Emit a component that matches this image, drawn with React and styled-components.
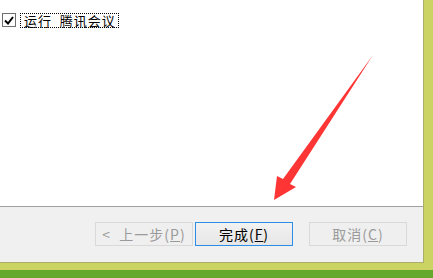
import React from 'react';
import styled, {createGlobalStyle} from 'styled-components';

const GlobalStyle = createGlobalStyle`
  html, body {
    margin: 0;
    padding: 0;
    background: #64a82e;
  }
  body {
    width: 433px;
    height: 278px;
    overflow: hidden;
    font-family: "Noto Sans CJK SC", "Liberation Sans", sans-serif;
  }
`;

const Desktop = styled.div`
  position: relative;
  width: 433px;
  height: 278px;
  background: #64a82e;
`;

const Frame = styled.div`
  width: 433px;
  height: 270px;
  box-sizing: border-box;
  padding: 0 9px 7px 0;
  background: #cbd462;
`;

const Dialog = styled.div`
  display: flex;
  flex-direction: column;
  width: 424px;
  height: 263px;
  box-sizing: border-box;
  border-right: 1px solid #a9ae6a;
  border-bottom: 1px solid #a9ae6a;
  background: #f0f0f0;
`;

const Content = styled.div`
  height: 207px;
  background: #ffffff;
  border-bottom: 1px solid #a0a0a0;
  padding: 13px 0 0 2px;
  box-sizing: border-box;
`;

const CheckRow = styled.label`
  display: flex;
  align-items: center;
  gap: 5px;
`;

const Box = styled.span`
  display: flex;
  align-items: center;
  justify-content: center;
  width: 12px;
  height: 12px;
  border: 1px solid #6f6f6f;
  background: #ffffff;
`;

const Label = styled.span`
  font-size: 13px;
  line-height: 12px;
  letter-spacing: 1px;
  color: #000000;
  padding: 1px 2px 0 3px;
  outline: 1px dotted #000000;
  outline-offset: 0;
  white-space: pre;
`;

const Footer = styled.div`
  flex: 1;
  display: flex;
  align-items: flex-start;
  padding: 15px 16px 0 95px;
`;

const Button = styled.div`
  display: flex;
  align-items: center;
  justify-content: center;
  width: 98px;
  height: 24px;
  box-sizing: border-box;
  margin-left: ${p => p.$gap || 0}px;
  border: 1px solid ${p => (p.$primary ? '#2a8ee8' : '#d9d9d9')};
  background: ${p => (p.$primary ? 'linear-gradient(#f2f2f2, #e6e6e6)' : '#efefef')};
  color: ${p => (p.$disabled ? '#9a9a9a' : '#000000')};
  font-size: 14px;
  line-height: 16px;
  letter-spacing: 1px;
  white-space: pre;
`;

const Key = styled.span`
  text-decoration: underline;
`;

const Arrow = styled.svg`
  position: absolute;
  left: 0;
  top: 0;
  pointer-events: none;
`;

export default function App() {
  return (
    <Desktop>
      <GlobalStyle />
      <Frame>
        <Dialog>
          <Content>
            <CheckRow>
              <Box>
                <svg width="10" height="9" viewBox="0 0 10 9">
                  <path d="M1 4.5 L4 7.5 L9 1" stroke="#000" strokeWidth="2" fill="none" />
                </svg>
              </Box>
              <Label>{'运行  腾讯会议'}</Label>
            </CheckRow>
          </Content>
          <Footer>
            <Button $disabled>{'<  上一步('}<Key>P</Key>)</Button>
            <Button $primary $gap={2}>{'完成('}<Key>F</Key>)</Button>
            <Button $disabled $gap={16}>{'取消('}<Key>C</Key>)</Button>
          </Footer>
        </Dialog>
      </Frame>
      <Arrow width="433" height="278" viewBox="0 0 433 278">
        <polygon points="274,200 277,176 283,179 373,55 290,184 296,187" fill="#fe3535" />
      </Arrow>
    </Desktop>
  );
}
